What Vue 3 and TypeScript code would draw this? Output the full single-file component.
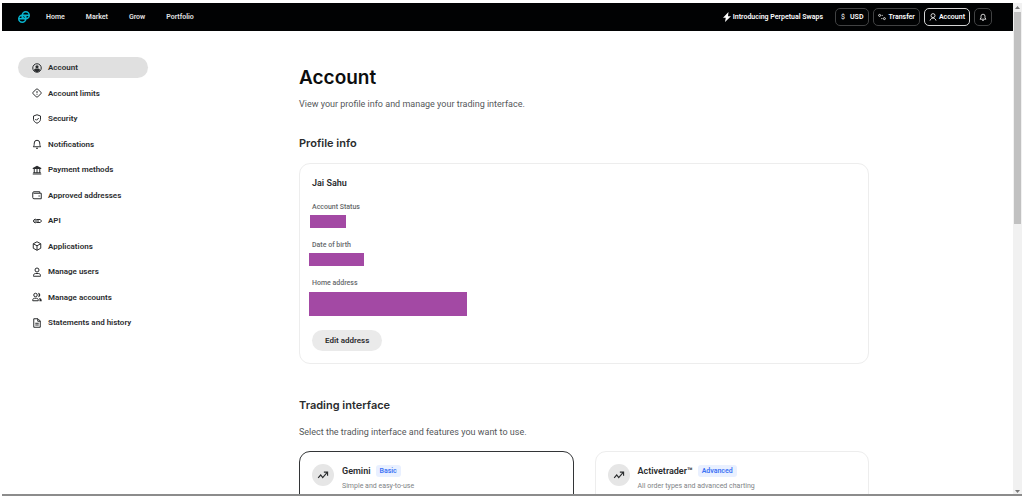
<script setup lang="ts">
interface NavItem {
  label: string
  icon: string
}

interface Field {
  label: string
  size: string
}

interface Plan {
  name: string
  badge: string
  text: string
}

const links: string[] = ['Home', 'Market', 'Grow', 'Portfolio']

const items: NavItem[] = [
  { label: 'Account', icon: 'account' },
  { label: 'Account limits', icon: 'limits' },
  { label: 'Security', icon: 'security' },
  { label: 'Notifications', icon: 'bell' },
  { label: 'Payment methods', icon: 'bank' },
  { label: 'Approved addresses', icon: 'wallet' },
  { label: 'API', icon: 'link' },
  { label: 'Applications', icon: 'box' },
  { label: 'Manage users', icon: 'user' },
  { label: 'Manage accounts', icon: 'users' },
  { label: 'Statements and history', icon: 'file' },
]

const fields: Field[] = [
  { label: 'Account Status', size: 'small' },
  { label: 'Date of birth', size: 'medium' },
  { label: 'Home address', size: 'large' },
]

const plans: Plan[] = [
  { name: 'Gemini', badge: 'Basic', text: 'Simple and easy-to-use' },
  { name: 'Activetrader™', badge: 'Advanced', text: 'All order types and advanced charting' },
]
</script>

<template>
  <div class="window">
    <div class="page">
      <header class="topbar">
        <a href="#" class="logo" aria-label="Gemini">
          <svg viewBox="0 0 24 24">
            <circle cx="15.5" cy="8.5" r="7" />
            <circle cx="8.5" cy="15.5" r="7" />
            <path d="M8.500 8.500H22M2 15.500h13.500M8.500 8.500V15.500M15.500 8.500v7" />
          </svg>
        </a>
        <nav class="links" aria-label="Main">
          <a v-for="link in links" :key="link" href="#">{{ link }}</a>
        </nav>
        <a href="#" class="promo">
          <svg viewBox="0 0 16 20"><path d="M11 0 0 11.500h5.500L4 20 16 8.500h-6z" /></svg>
          Introducing Perpetual Swaps
        </a>
        <div class="tools">
          <button type="button" class="tool usd"><span class="dollar">$</span>USD</button>
          <button type="button" class="tool">
            <svg viewBox="0 0 20 20">
              <circle cx="4" cy="6" r="2.500" /><path d="M9 6h3" />
              <circle cx="16" cy="14" r="2.500" /><path d="M8 14h3" />
            </svg>
            Transfer
          </button>
          <button type="button" class="tool current">
            <svg viewBox="0 0 20 20">
              <circle cx="10" cy="6.500" r="5" /><path d="M2.500 19v-1.500L7 13h6l4.500 4.500V19" />
            </svg>
            Account
          </button>
          <button type="button" class="tool alerts" aria-label="Notifications">
            <svg viewBox="0 0 20 20">
              <path d="M2.500 15.500 5 12V8a5 5 0 0 1 10 0v4l2.500 3.500zM8 18.500h4" />
            </svg>
          </button>
        </div>
      </header>

      <div class="body">
        <nav class="side" aria-label="Settings">
          <a
            v-for="(item, i) in items"
            :key="item.label"
            href="#"
            class="item"
            :class="{ active: i === 0 }"
          >
            <svg viewBox="0 0 20 20" aria-hidden="true">
              <template v-if="item.icon === 'account'">
                <circle cx="10" cy="10" r="8.500" />
                <circle class="solid" cx="10" cy="7.500" r="3.200" />
                <path class="solid" d="M4 14.500c.5-3 2.500-3.500 6-3.500s5.500.5 6 3.500c-1.500 2.500-3.500 3.500-6 3.500s-4.500-1-6-3.500z" />
              </template>
              <template v-else-if="item.icon === 'limits'">
                <path d="M8.600 2.200a2 2 0 0 1 2.800 0l6.400 6.400a2 2 0 0 1 0 2.800l-6.400 6.400a2 2 0 0 1-2.800 0l-6.400-6.400a2 2 0 0 1 0-2.800z" />
                <path d="M10 6v4.500M10 12.500v1.500" />
              </template>
              <template v-else-if="item.icon === 'security'">
                <path d="M10 1.500 17 4v6.500c0 4-3.500 6.500-7 8-3.500-1.500-7-4-7-8V4z" />
                <path d="m6.500 10 2.500 2.500 4.500-4.500" />
              </template>
              <template v-else-if="item.icon === 'bell'">
                <path d="M2.500 15.500C4 14 4.500 12.500 4.500 8a5.500 5.500 0 0 1 11 0c0 4.500.5 6 2 7.500z" />
                <path d="M8 18.500h4" />
              </template>
              <template v-else-if="item.icon === 'bank'">
                <path class="solid" d="M10 1.500 18.500 6v2h-17V6z" />
                <path d="M4.500 8v8M10 8v8M15.500 8v8M2.500 15.500h15M1.500 18h17" />
              </template>
              <template v-else-if="item.icon === 'wallet'">
                <path d="M15.500 6V3.500H4A2.500 2.500 0 0 0 1.500 6v9A2.500 2.500 0 0 0 4 17.500h14.500V6.500H3" />
                <path d="M13 12h2.500" />
              </template>
              <template v-else-if="item.icon === 'link'">
                <path d="M9 7a4 3.500 0 1 0 0 6h7.500l2.500-3-2.500-3z" />
                <path d="M5 10h9" />
              </template>
              <template v-else-if="item.icon === 'box'">
                <path d="m10 1.500 7.500 4v9l-7.500 4-7.500-4v-9z" />
                <path d="m2.500 5.500 7.500 4 7.500-4M10 9.500v9" />
              </template>
              <template v-else-if="item.icon === 'user'">
                <circle cx="10" cy="6" r="4" />
                <path d="M3 18.500V17c0-2.500 2-4 4-4h6c2 0 4 1.500 4 4v1.500z" />
              </template>
              <template v-else-if="item.icon === 'users'">
                <circle cx="7" cy="6" r="3.500" />
                <path d="M1.500 17.500V16c0-2 1.500-3.500 3.500-3.500h4c2 0 3.500 1.500 3.500 3.500v1.500z" />
                <path class="solid" d="M12 1.500c6 0 6 9 0 9 2-3 2-6 0-9zM14 12c3.500 0 5.500 2 5.500 6.500H15c0-3 .5-4.500-1-6.500z" />
              </template>
              <template v-else>
                <path d="M3.500 1.500H12L16.500 6v12.500h-13zM11.500 2v4.500h5M6.500 10.500h7M6.500 14h7" />
              </template>
            </svg>
            {{ item.label }}
          </a>
        </nav>

        <main class="main">
          <h1>Account</h1>
          <p class="lead">View your profile info and manage your trading interface.</p>

          <h2>Profile info</h2>
          <section class="profile">
            <h3>Jai Sahu</h3>
            <dl>
              <template v-for="field in fields" :key="field.label">
                <dt>{{ field.label }}</dt>
                <dd :class="field.size"></dd>
              </template>
            </dl>
            <button type="button" class="edit">Edit address</button>
          </section>

          <h2>Trading interface</h2>
          <p class="lead">Select the trading interface and features you want to use.</p>
          <div class="plans">
            <article v-for="(plan, i) in plans" :key="plan.name" class="plan" :class="{ chosen: i === 0 }">
              <span class="round">
                <svg viewBox="0 0 20 14"><path d="m1.500 12 4.500-5 3.500 4.500L17 3M11.500 2H18v6.500" /></svg>
              </span>
              <div>
                <div class="title">
                  <h3>{{ plan.name }}</h3>
                  <span class="badge">{{ plan.badge }}</span>
                </div>
                <p>{{ plan.text }}</p>
              </div>
            </article>
          </div>
        </main>
      </div>
    </div>

    <div class="scrollbar" aria-hidden="true">
      <svg viewBox="0 0 9 9"><path d="M2 6h5L4.500 3z" /></svg>
      <div class="thumb"></div>
      <svg viewBox="0 0 9 9"><path d="M2 3h5L4.500 6z" /></svg>
    </div>
  </div>
</template>

<style>
body {
  margin: 0;
  background: #fff;
}
</style>

<style scoped>
* {
  box-sizing: border-box;
}

.window {
  display: flex;
  height: 100vh;
  padding: 3px 2px 1px;
  overflow: hidden;
  font-family: Roboto, "Liberation Sans", sans-serif;
  color: #2a2c2e;
  position: relative;
}

.window::after {
  content: "";
  position: absolute;
  left: 2px;
  right: 2px;
  bottom: 1px;
  height: 2px;
  background: #8c8c8c;
}

.page {
  flex: 1;
  min-width: 0;
  overflow: hidden;
}

h1,
h2,
h3,
p,
dl,
dd {
  margin: 0;
}

a {
  color: inherit;
  text-decoration: none;
}

button {
  font: inherit;
  color: inherit;
  cursor: pointer;
}

svg {
  display: block;
  fill: none;
  stroke: currentColor;
  stroke-width: 2;
  flex: none;
}

.topbar {
  display: flex;
  align-items: center;
  height: 28px;
  padding: 0 21px 0 16px;
  background: #010203;
  color: #fff;
  font-size: 7px;
  font-weight: 600;
}

.logo svg {
  width: 12px;
  height: 12px;
  color: #08b5cf;
  stroke-width: 3;
}

.links {
  display: flex;
  gap: 21px;
  margin-left: 16px;
  color: #e4e4e4;
}

.promo {
  display: flex;
  align-items: center;
  gap: 2px;
  margin-left: auto;
}

.promo svg {
  width: 8px;
  height: 10px;
  fill: #fff;
  stroke: none;
}

.tools {
  display: flex;
  gap: 4px;
  margin-left: 12px;
}

.tool {
  display: flex;
  align-items: center;
  justify-content: center;
  gap: 2px;
  height: 18px;
  padding: 0 4px;
  border: 1px solid #414243;
  border-radius: 5px;
  background: none;
}

.tool svg {
  width: 8px;
  height: 8px;
}

.tool.current {
  border-color: #d4d4d4;
}

.tool.usd {
  padding: 0 5px;
}

.tool.alerts {
  width: 18px;
  padding: 0;
}

.dollar {
  margin-right: 3px;
  font-weight: 400;
}

.body {
  display: flex;
  padding: 26px 144px 0 16px;
}

.side {
  display: flex;
  flex-direction: column;
  justify-content: space-between;
  flex: none;
  width: 130px;
  height: 276px;
}

.item {
  display: flex;
  align-items: center;
  gap: 6px;
  height: 21px;
  padding-left: 14px;
  border-radius: 11px;
  font-size: 8px;
  font-weight: 600;
}

.item svg {
  width: 10px;
  height: 10px;
}

svg .solid {
  fill: currentColor;
  stroke: none;
}

.item.active {
  background: #e0e0e0;
}

.main {
  flex: 1;
  min-width: 0;
  margin-left: 151px;
  padding-top: 9px;
}

h1,
h2 {
  font-family: Inter, "Liberation Sans", sans-serif;
}

h1 {
  font-size: 19px;
  line-height: 24px;
  font-weight: 600;
  color: #0c0d0e;
}

.lead {
  margin-top: 8px;
  font-size: 9px;
  line-height: 12px;
  color: #55585a;
}

h2 {
  margin-top: 25px;
  font-size: 11px;
  line-height: 16px;
  font-weight: 600;
}

.profile {
  margin-top: 12px;
  padding: 12px;
  border: 1px solid #ededed;
  border-radius: 11px;
}

h3 {
  font-size: 9px;
  line-height: 14px;
  font-weight: 600;
}

dl {
  margin-top: 12px;
}

dt {
  font-size: 7px;
  line-height: 10px;
  font-weight: 500;
  color: #66696b;
}

dd {
  height: 13px;
  margin: 3px 0 12px -3px;
  background: #a349a4;
}

.small {
  width: 36px;
  margin-left: -2px;
}

.medium {
  width: 55px;
}

.large {
  width: 158px;
  height: 24px;
  margin-top: 4px;
  margin-bottom: 14px;
}

.edit {
  display: block;
  height: 21px;
  padding: 0 13px;
  border: 0;
  border-radius: 11px;
  background: #eaeaea;
  font-size: 8px;
  font-weight: 600;
}

.profile + h2 {
  margin-top: 33px;
}

h2 + .lead {
  margin-top: 13px;
}

.plans {
  display: grid;
  grid-template-columns: 1fr 1fr;
  gap: 21px;
  margin-top: 13px;
}

.plan {
  display: flex;
  gap: 8px;
  height: 80px;
  padding: 12px;
  border: 1px solid #ededed;
  border-radius: 11px;
}

.plan.chosen {
  border-color: #333537;
}

.round {
  display: grid;
  place-items: center;
  flex: none;
  width: 22px;
  height: 22px;
  border-radius: 50%;
  background: #e6e6e6;
}

.round svg {
  width: 12px;
  height: 8px;
}

.title {
  display: flex;
  align-items: center;
  gap: 5px;
}

.badge {
  padding: 0 4px;
  border-radius: 3px;
  background: #e9f0ff;
  color: #3c72f5;
  font-size: 7px;
  line-height: 12px;
  font-weight: 600;
}

.plan p {
  margin-top: 3px;
  font-size: 7px;
  line-height: 10px;
  color: #808386;
}

.scrollbar {
  display: flex;
  flex-direction: column;
  width: 9px;
  background: #f1f1f1;
}

.scrollbar svg {
  width: 9px;
  height: 9px;
  fill: #777;
  stroke: none;
}

.thumb {
  flex: none;
  height: 43%;
  margin: 0 1px auto;
  background: #c1c1c1;
}
</style>
